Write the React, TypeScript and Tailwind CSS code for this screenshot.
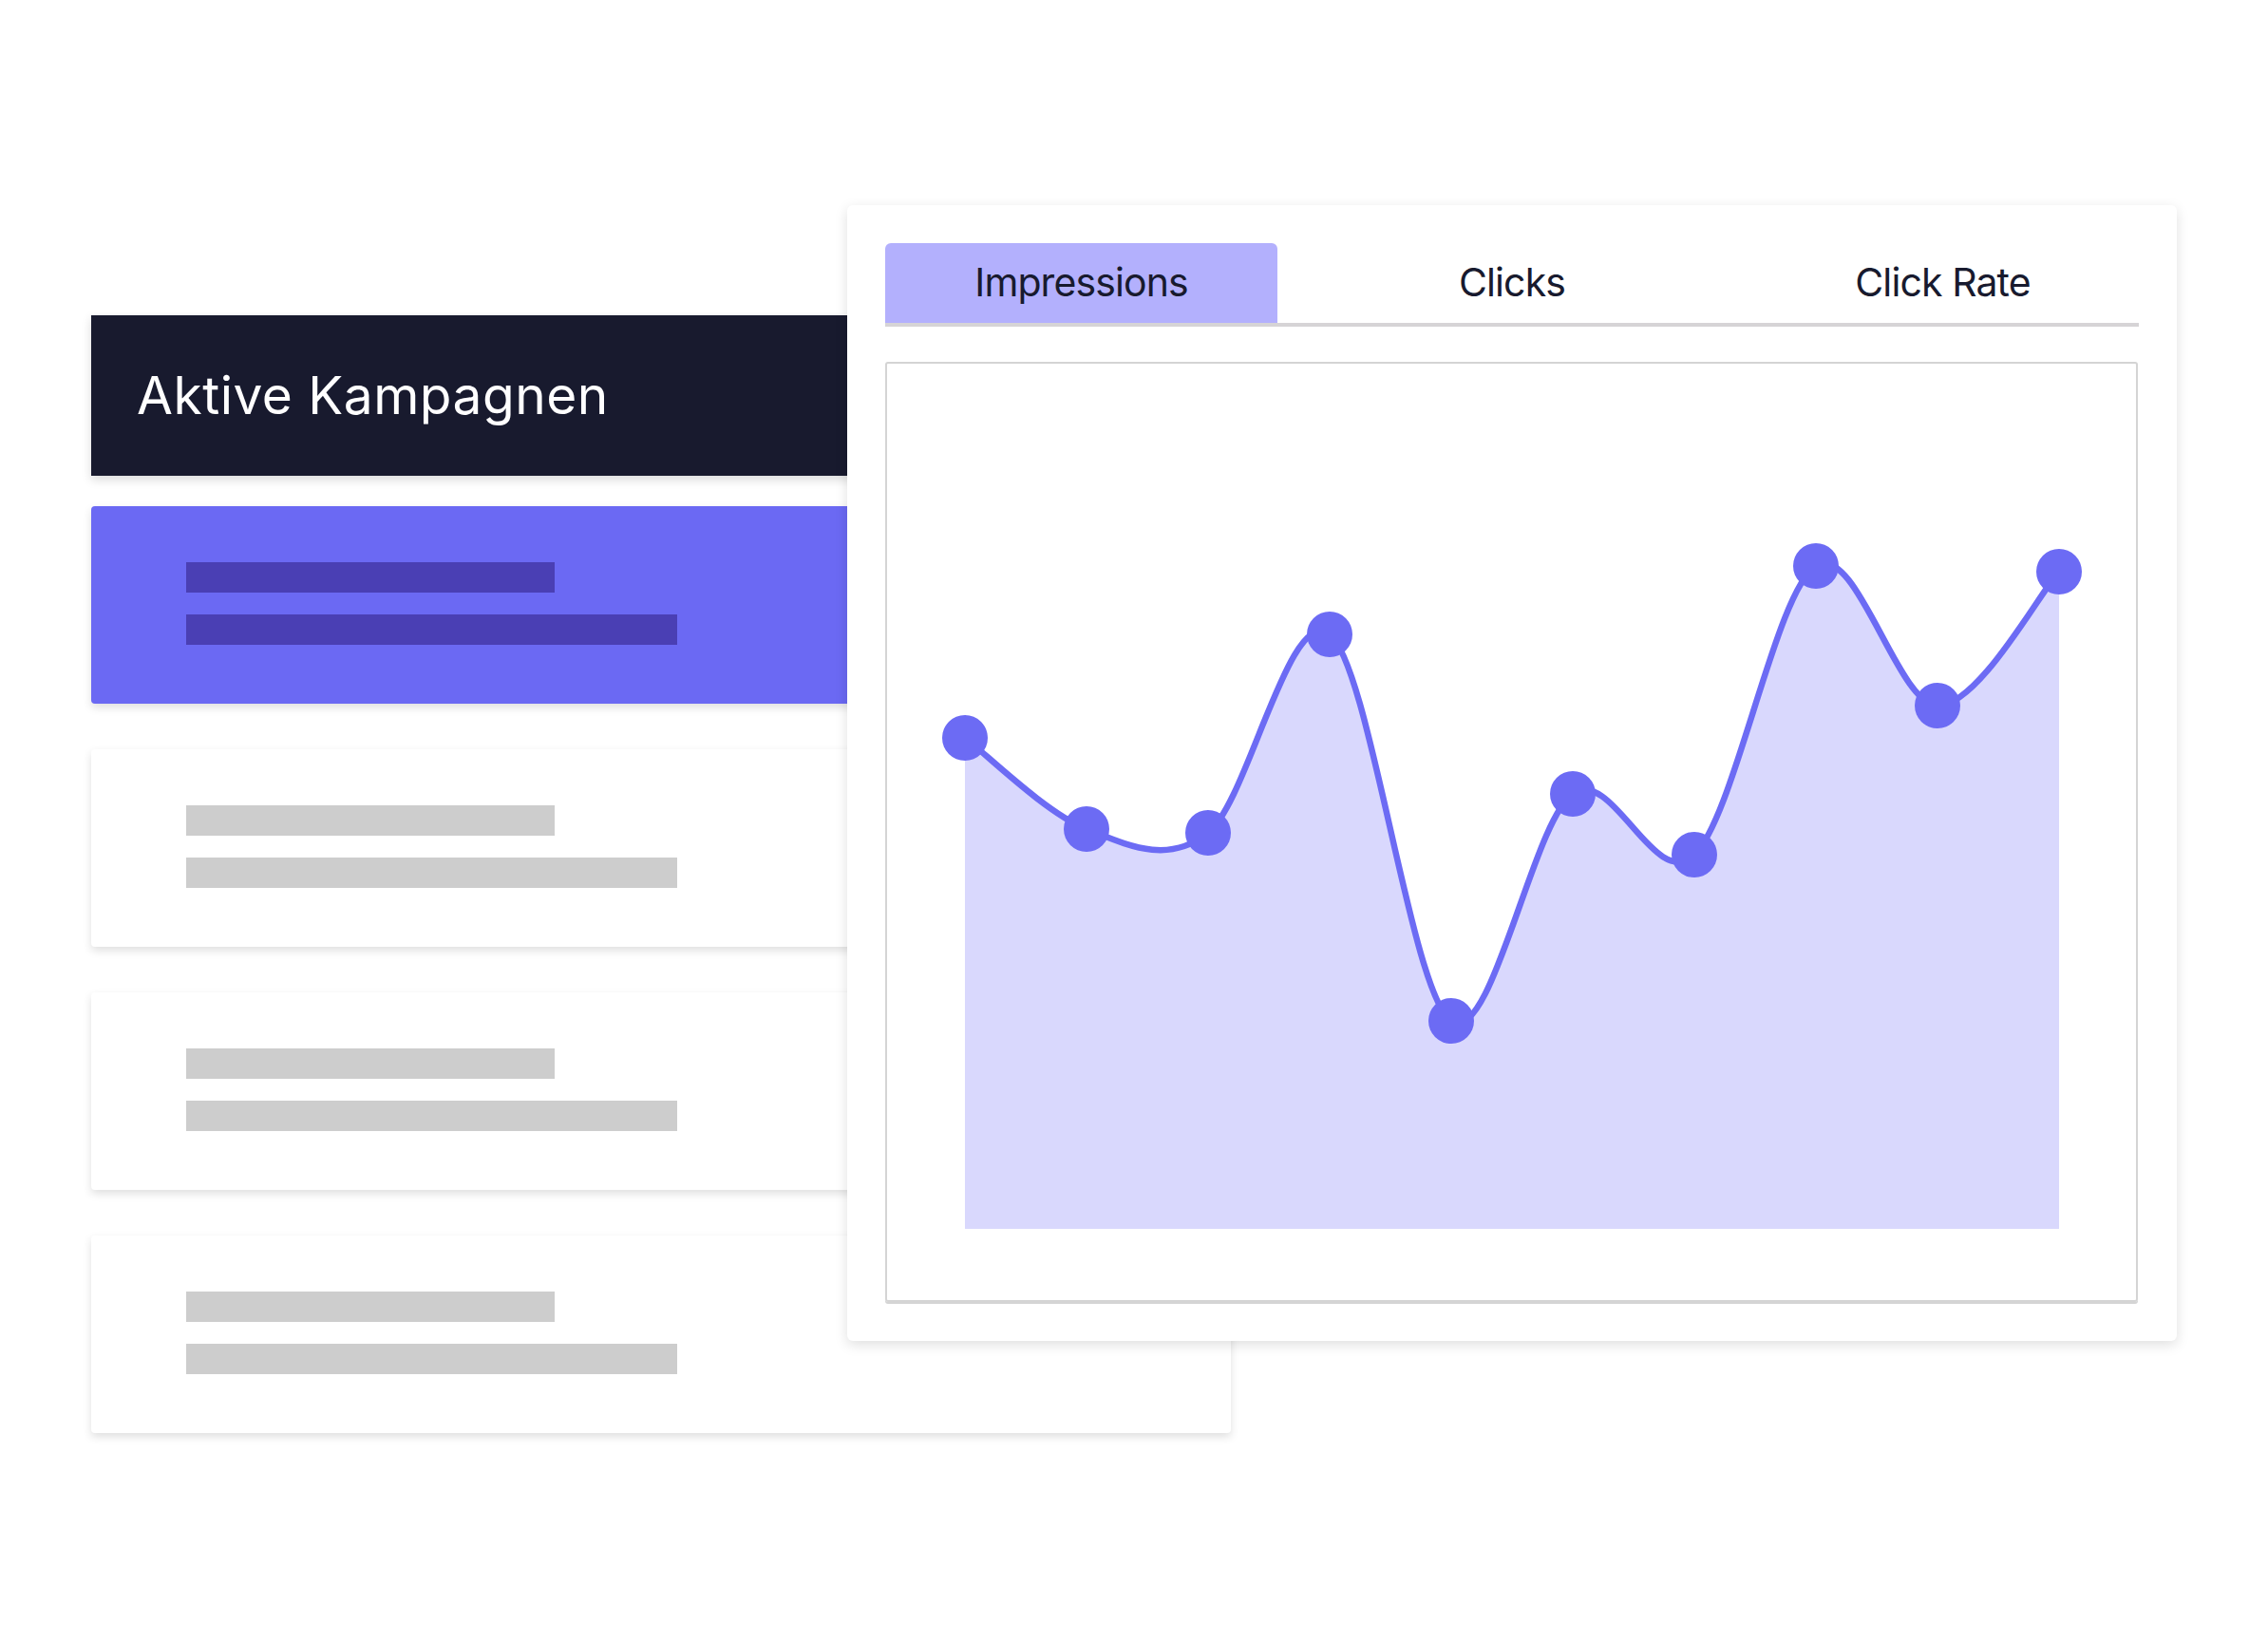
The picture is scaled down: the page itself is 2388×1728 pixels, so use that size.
import React from 'react'

const points: [number, number][] = [
  [82, 394],
  [210, 490],
  [338, 494],
  [466, 285],
  [594, 692],
  [722, 453],
  [850, 517],
  [978, 213],
  [1106, 360],
  [1234, 219],
]

const BASELINE = 911

// catmull-rom through every point, as cubic beziers
function curvePath(pts: [number, number][]) {
  let d = `M ${pts[0][0]} ${pts[0][1]}`
  for (let i = 0; i < pts.length - 1; i++) {
    const p0 = pts[i - 1] ?? pts[i]
    const p1 = pts[i]
    const p2 = pts[i + 1]
    const p3 = pts[i + 2] ?? p2
    const c1x = p1[0] + (p2[0] - p0[0]) / 6
    const c1y = p1[1] + (p2[1] - p0[1]) / 6
    const c2x = p2[0] - (p3[0] - p1[0]) / 6
    const c2y = p2[1] - (p3[1] - p1[1]) / 6
    d += ` C ${c1x} ${c1y} ${c2x} ${c2y} ${p2[0]} ${p2[1]}`
  }
  return d
}

function Chart() {
  const line = curvePath(points)
  const first = points[0]
  const last = points[points.length - 1]
  const area = `${line} L ${last[0]} ${BASELINE} L ${first[0]} ${BASELINE} Z`

  return (
    <svg width="1315" height="986" viewBox="0 0 1315 986" className="block">
      <path d={area} fill="#d9d8fd" />
      <path d={line} fill="none" stroke="#6c6bf4" strokeWidth="6.5" />
      {points.map(([x, y], i) => (
        <circle key={i} cx={x} cy={y} r="24" fill="#6c6bf4" />
      ))}
    </svg>
  )
}

function CampaignCard({ active }: { active?: boolean }) {
  return (
    <div
      className={`h-[208px] rounded-[4px] pl-[100px] pt-[59px] flex flex-col gap-[23px] shadow-[0_4px_10px_rgba(0,0,0,0.13)] ${
        active ? 'bg-[#6b69f3]' : 'bg-white'
      }`}
    >
      <div className={`h-[32px] w-[388px] ${active ? 'bg-[#4a3fb4]' : 'bg-[#cdcdcd]'}`} />
      <div className={`h-[32px] w-[517px] ${active ? 'bg-[#4a3fb4]' : 'bg-[#cdcdcd]'}`} />
    </div>
  )
}

export default function App() {
  const tabs = ['Impressions', 'Clicks', 'Click Rate']

  return (
    <main
      className="w-[2388px] h-[1728px] bg-white flex items-start pl-[96px] overflow-hidden"
      style={{ fontFamily: 'Inter, "Noto Sans", sans-serif' }}
    >
      {/* left stack */}
      <div className="w-[1200px] shrink-0 mt-[332px] flex flex-col">
        <div className="h-[169px] bg-[#181a2e] flex items-center pl-[48px] shadow-[0_4px_10px_rgba(0,0,0,0.15)]">
          <h1 className="text-[55px] font-normal text-white tracking-[0.5px] leading-none">
            Aktive Kampagnen
          </h1>
        </div>
        <div className="mt-[32px] flex flex-col gap-[48px]">
          <CampaignCard active />
          <CampaignCard />
          <CampaignCard />
          <CampaignCard />
        </div>
      </div>

      {/* stats panel, lies over the stack */}
      <div className="relative z-10 ml-[-404px] mt-[216px] w-[1400px] h-[1196px] shrink-0 bg-white rounded-[6px] p-[40px] shadow-[0_4px_14px_rgba(0,0,0,0.13)] flex flex-col">
        <div className="grid grid-cols-[413px_1fr_413px] h-[88px] border-b-4 border-[#d6d4d6]">
          {tabs.map((t, i) => (
            <div
              key={t}
              className={`flex items-center justify-center text-[41px] text-[#181a2e] tracking-[-0.9px] ${
                i === 0 ? 'bg-[#b3b0fd] rounded-t-[6px]' : ''
              }`}
            >
              {t}
            </div>
          ))}
        </div>
        <div className="mt-[37px] w-[1319px] h-[990px] border-2 border-[#d4d4d4] rounded-[3px] shadow-[0_2px_0_#d4d4d4] overflow-hidden">
          <Chart />
        </div>
      </div>
    </main>
  )
}
